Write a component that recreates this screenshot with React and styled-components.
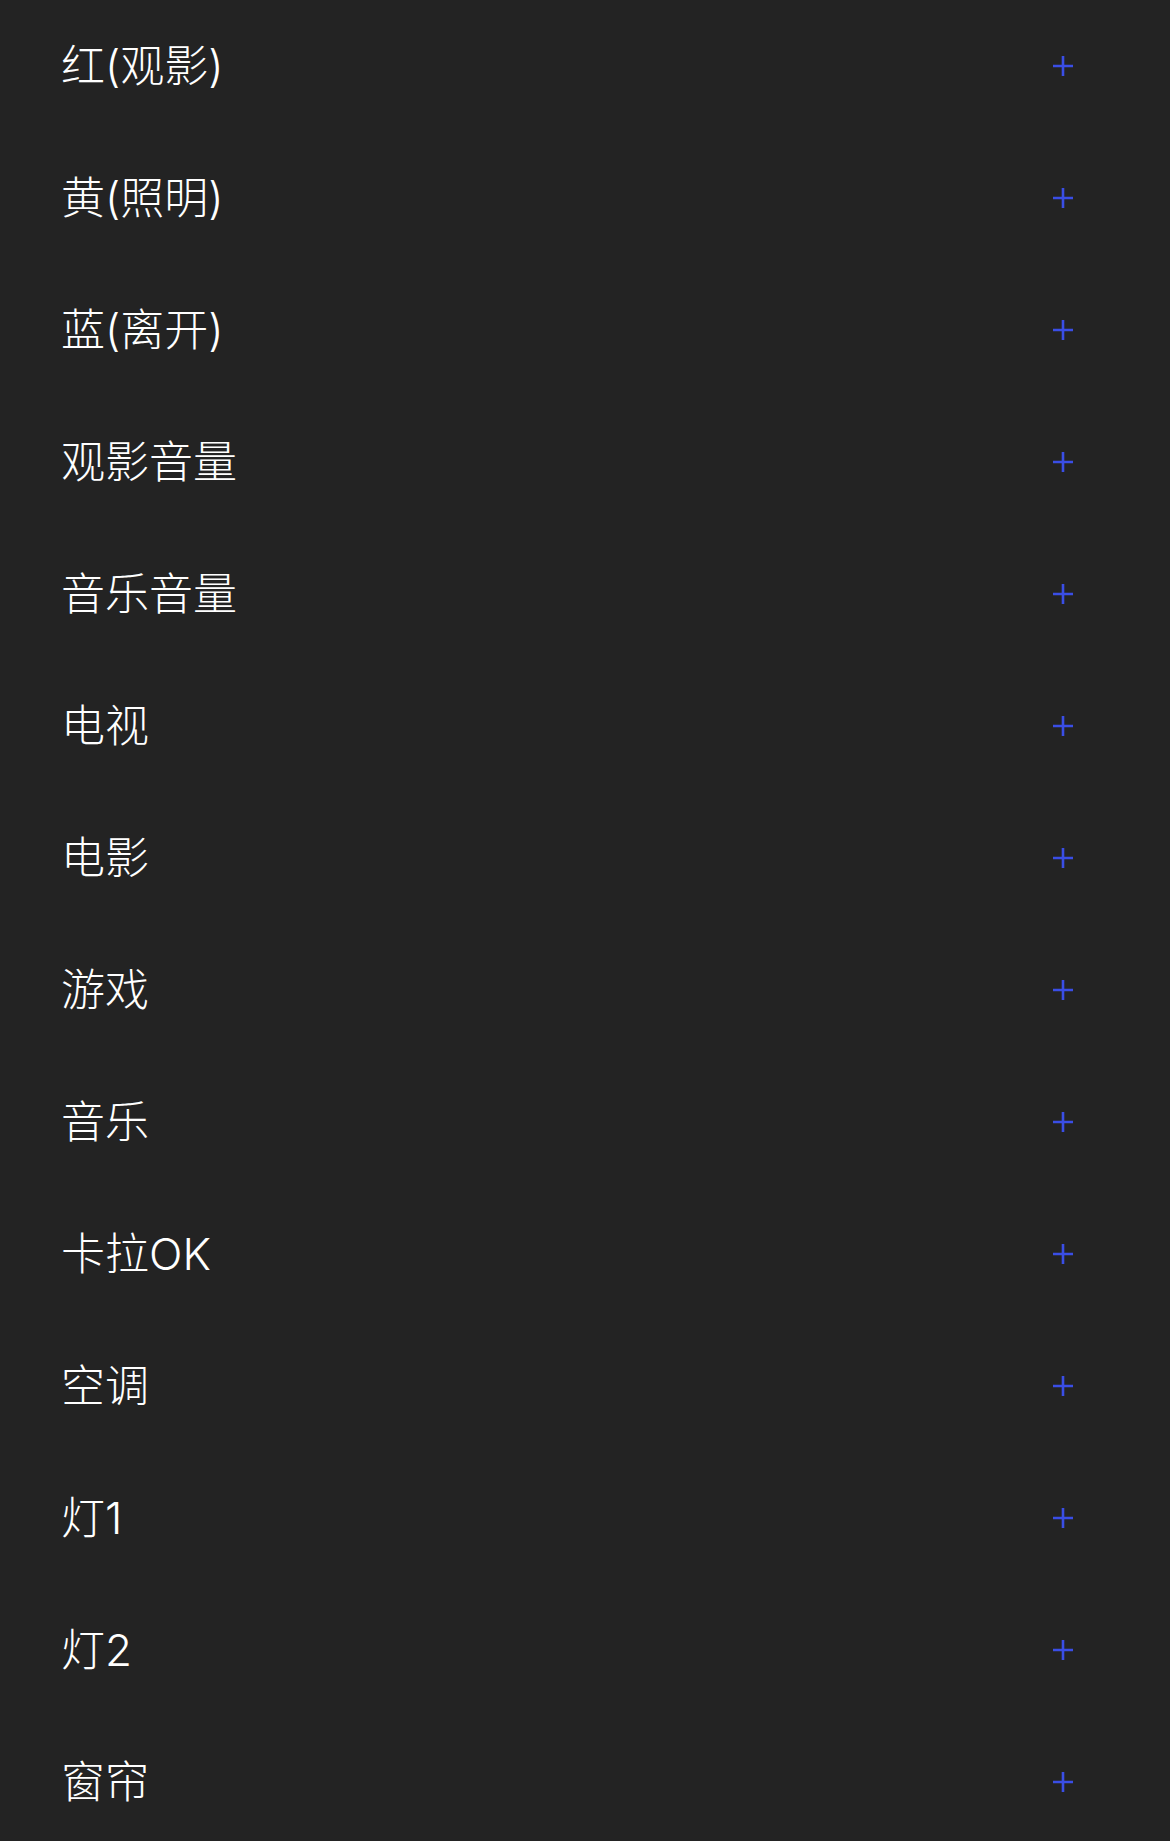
import React from "react";
import styled, { createGlobalStyle } from "styled-components";

const GlobalStyle = createGlobalStyle`
  html, body {
    margin: 0;
    padding: 0;
    background: #232323;
  }
  body {
    font-family: "Noto Sans CJK SC", "Noto Sans", sans-serif;
  }
`;

const List = styled.div`
  display: flex;
  flex-direction: column;
  width: 1170px;
  height: 1841px;
  overflow: hidden;
  background: #232323;
`;

const Row = styled.div`
  display: flex;
  align-items: center;
  justify-content: space-between;
  flex: 0 0 132px;
  height: 132px;
  padding: 0 97px 0 61px;
  box-sizing: border-box;
`;

const Label = styled.span`
  color: #ffffff;
  font-size: 44px;
  font-weight: 300;
  line-height: 1;
  margin-top: -1px;
  font-family: "Inter", "Noto Sans CJK SC", sans-serif;
`;

const AddButton = styled.button`
  display: flex;
  align-items: center;
  justify-content: center;
  width: 20px;
  height: 20px;
  padding: 0;
  border: none;
  background: transparent;
  cursor: pointer;
`;

const items = [
  "红(观影)",
  "黄(照明)",
  "蓝(离开)",
  "观影音量",
  "音乐音量",
  "电视",
  "电影",
  "游戏",
  "音乐",
  "卡拉OK",
  "空调",
  "灯1",
  "灯2",
  "窗帘",
];

const PlusIcon = () => (
  <svg width="20" height="20" viewBox="0 0 20 20">
    <path d="M10 0V20M0 10H20" stroke="#3a4ee6" strokeWidth="2.6" />
  </svg>
);

export default function App() {
  return (
    <>
      <GlobalStyle />
      <List>
        {items.map((name) => (
          <Row key={name}>
            <Label>{name}</Label>
            <AddButton aria-label="添加">
              <PlusIcon />
            </AddButton>
          </Row>
        ))}
      </List>
    </>
  );
}
